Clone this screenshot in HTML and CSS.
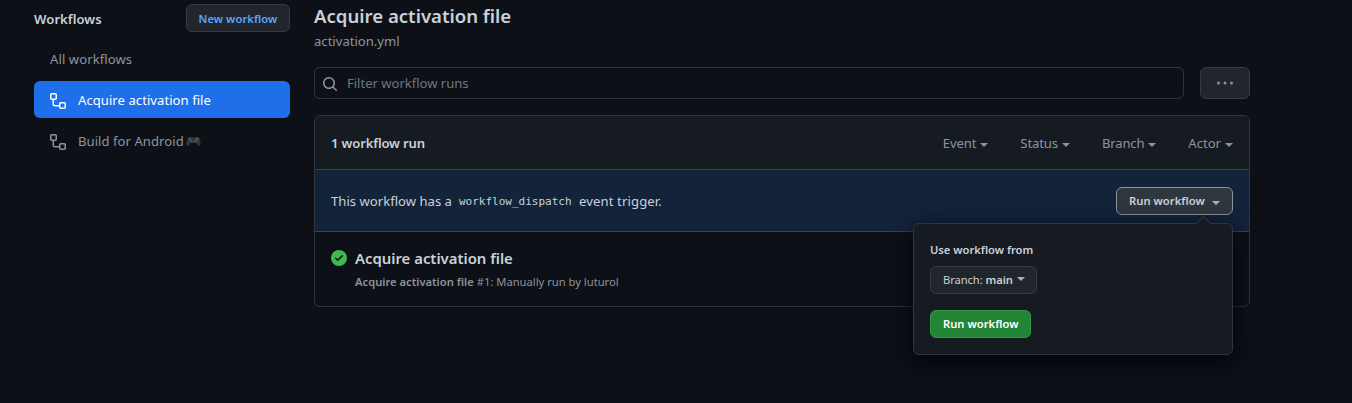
FILE: index.html
```html
<!DOCTYPE html>
<html lang="en">
<head>
<meta charset="utf-8">
<title>Workflow runs</title>
<link rel="stylesheet" href="styles.css">
</head>
<body>
<svg class="defs" width="0" height="0" aria-hidden="true">
  <symbol id="workflow" viewBox="0 0 16 16"><path fill-rule="evenodd" d="M0 1.75C0 .784.784 0 1.75 0h3.5C6.216 0 7 .784 7 1.75v3.5A1.75 1.75 0 015.25 7H4v4a1 1 0 001 1h4v-1.25C9 9.784 9.784 9 10.75 9h3.5c.966 0 1.75.784 1.75 1.75v3.5A1.75 1.75 0 0114.25 16h-3.5A1.75 1.75 0 019 14.25v-.75H5A2.5 2.5 0 012.5 11V7h-.75A1.75 1.75 0 010 5.25v-3.5zm1.75-.25a.25.25 0 00-.25.25v3.5c0 .138.112.25.25.25h3.5a.25.25 0 00.25-.25v-3.5a.25.25 0 00-.25-.25h-3.5zm9 9a.25.25 0 00-.25.25v3.5c0 .138.112.25.25.25h3.5a.25.25 0 00.25-.25v-3.5a.25.25 0 00-.25-.25h-3.5z"/></symbol>
</svg>
<div class="layout">
  <aside class="sidebar">
    <div class="sidebar-head"><h3 class="sidebar-title">Workflows</h3><button class="btn btn-new">New workflow</button></div>
    <nav class="menu">
      <a class="menu-item menu-all">All workflows</a>
      <a class="menu-item selected"><svg class="icon" width="16" height="16"><use href="#workflow"/></svg><span>Acquire activation file</span></a>
      <a class="menu-item"><svg class="icon" width="16" height="16"><use href="#workflow"/></svg><span class="build">Build for Android</span><svg class="pad" width="15" height="11" viewBox="0 0 15 11"><path d="M3 1h2.2l.6.6h3.4l.6-.6H12c1 .2 1.5 1.3 1.9 3 .5 2 .9 4.2.5 5.3-.3.9-1.3.9-2 .1L10.300 7H4.700L2.600 9.400c-.7.8-1.700.8-2-.1C.2 8.200.6 6 1.100 4 1.500 2.300 2 1.200 3 1z" fill="#34373a"/><path d="M3 3.500h2.200M4.100 2.400v2.200" stroke="#666b70" stroke-width=".8"/><circle cx="5.700" cy="5.600" r="1" fill="#505458"/><circle cx="9.300" cy="5.600" r="1" fill="#505458"/><circle cx="10.900" cy="2.500" r=".6" fill="#b09b2b"/><circle cx="12.100" cy="3.600" r=".6" fill="#a64336"/><circle cx="10.900" cy="4.600" r=".6" fill="#3d8048"/><circle cx="9.800" cy="3.600" r=".6" fill="#386da3"/></svg></a>
    </nav>
  </aside>
  <main class="content">
    <h2 class="title">Acquire activation file</h2>
    <div class="filename">activation.yml</div>
    <div class="toolbar">
      <div class="search"><svg class="icon" width="16" height="16" viewBox="0 0 16 16"><path fill-rule="evenodd" d="M11.500 7a4.499 4.499 0 11-8.998 0A4.499 4.499 0 0111.500 7zm-.82 4.740a6 6 0 111.060-1.060l3.040 3.040a.75.75 0 11-1.060 1.060l-3.040-3.040z"/></svg><span>Filter workflow runs</span></div>
      <button class="btn btn-more" aria-label="More"><svg class="icon" width="16" height="16" viewBox="0 0 16 16"><circle cx="1.500" cy="8" r="1.500"/><circle cx="8" cy="8" r="1.500"/><circle cx="14.500" cy="8" r="1.500"/></svg></button>
    </div>
    <section class="box">
      <header class="box-head">
        <strong class="count">1 workflow run</strong>
        <div class="filters"><span class="filter event">Event<i class="caret"></i></span><span class="filter status">Status<i class="caret"></i></span><span class="filter branch">Branch<i class="caret"></i></span><span class="filter actor">Actor<i class="caret"></i></span></div>
      </header>
      <div class="notice">
        <div class="notice-text"><span class="lead">This workflow has a</span><code class="code">workflow_dispatch</code><span class="trail">event trigger.</span></div>
        <div class="dropdown">
          <button class="btn btn-open"><span>Run workflow</span><i class="caret"></i></button>
          <div class="popover">
            <strong class="label">Use workflow from</strong>
            <button class="btn btn-branch"><span>Branch:</span><b class="main-name">main</b><i class="caret"></i></button>
            <button class="btn btn-run">Run workflow</button>
          </div>
        </div>
      </div>
      <article class="run">
        <svg class="check" width="16" height="16" viewBox="0 0 16 16"><path fill-rule="evenodd" d="M8 16A8 8 0 108 0a8 8 0 000 16zm3.780-9.720a.75.75 0 00-1.060-1.060L6.750 9.190 5.280 7.720a.75.75 0 00-1.060 1.060l2 2a.75.75 0 001.060 0l4.500-4.500z"/></svg>
        <div class="run-body"><h4 class="run-title">Acquire activation file</h4><div class="run-meta"><b class="run-name">Acquire activation file</b><span class="run-by">#1: Manually run by luturol</span></div></div>
      </article>
    </section>
  </main>
</div>
</body>
</html>
```
FILE: styles.css
```css
* { box-sizing: border-box; }
body { margin: 0; height: 403px; overflow: hidden; background: #0d1117; color: #c9d1d9; font: 13.1px/20px "Noto Sans", sans-serif; }
h2, h3, h4 { margin: 0; font-weight: 600; }
b, strong { font-weight: 600; }
.defs { position: absolute; }
.icon { flex: none; fill: currentColor; }
.layout { display: flex; gap: 24px; padding: 4px 102px 0 34px; }
.sidebar { width: 256px; flex: none; }
.content { flex: 1; min-width: 0; }
.btn { display: flex; align-items: center; height: 28px; padding: 1px 12px 0; border: 1px solid #363b42; border-radius: 6px; background: #21262d; color: #c9d1d9; font: 600 11.2px/18px "Noto Sans", sans-serif; white-space: nowrap; }
.sidebar-head { display: flex; justify-content: space-between; align-items: center; height: 28px; }
.sidebar-title { font-size: 13.1px; line-height: 20px; padding-top: 2px; letter-spacing: .04px; }
.btn-new { width: 104px; padding: 1px 11.5px 0; color: #58a6ff; letter-spacing: .05px; }
.menu { display: flex; flex-direction: column; gap: 4px; padding-top: 8px; color: #8b949e; }
.menu-item { display: flex; align-items: center; height: 37px; padding: 0 16px; border-radius: 6px; letter-spacing: .04px; white-space: nowrap; }
.menu-all { letter-spacing: .07px; }
.menu-item .icon { margin: 3px 12px 0 0; }
.selected { background: #1f6feb; color: #fff; }
.pad { margin: 1px 0 0 2px; }
.title { font-size: 18.6px; line-height: 30px; margin-top: -3px; letter-spacing: -.01px; }
.filename { color: #8b949e; }
.toolbar { display: flex; gap: 16px; margin-top: 16px; }
.search { flex: 1; display: flex; align-items: center; gap: 9px; height: 32px; padding: 0 7px; border: 1px solid #30363d; border-radius: 6px; color: #6e7681; }
.search .icon { color: #8b949e; margin-top: 2px; }
.search span { letter-spacing: -.03px; }
.btn-more { width: 50px; height: 32px; padding-top: 0; justify-content: center; color: #8b949e; }
.box { margin-top: 16px; height: 192px; border: 1px solid #30363d; border-radius: 6px; }
.box-head { display: flex; justify-content: space-between; align-items: center; height: 53px; padding: 1px 16px; background: #161b22; border-radius: 5px 5px 0 0; }
.count { letter-spacing: -.17px; }
.filters { display: flex; gap: 32px; color: #8b949e; }
.filter { display: flex; align-items: center; gap: 4px; }
.event, .status { letter-spacing: -.12px; }
.branch { letter-spacing: -.2px; }
.caret { width: 0; height: 0; border: 4px solid transparent; border-top-color: currentColor; border-bottom: 0; margin-top: 4px; }
.notice { display: flex; justify-content: space-between; align-items: center; height: 63px; padding: 0 16px; border: solid #1c4784; border-width: 1px 0; background: #13233a; }
.notice-text { display: flex; align-items: center; white-space: nowrap; }
.lead { width: 128px; letter-spacing: .01px; }
.code { width: 120px; font: 11px/20px "DejaVu Sans Mono", monospace; padding-top: 2px; }
.trail { letter-spacing: .12px; }
.dropdown { position: relative; }
.btn-open { width: 117px; gap: 7px; background: #30363d; border-color: #8b949e; letter-spacing: .04px; }
.btn-open .caret, .btn-branch .caret { color: #a9b1b9; }
.popover { position: absolute; z-index: 2; top: 36px; right: 0; width: 320px; height: 132px; padding: 16px; display: flex; flex-direction: column; align-items: flex-start; background: #161b22; border: 1px solid #30363d; border-radius: 6px; box-shadow: 0 8px 24px #010409; }
.popover::before { content: ""; position: absolute; top: -6px; right: 23px; width: 10px; height: 10px; background: #161b22; border: solid #30363d; border-width: 1px 0 0 1px; transform: rotate(45deg); }
.label { font-size: 11.2px; line-height: 18px; letter-spacing: -.02px; padding-top: 1px; height: 26px; }
.btn-branch { width: 107px; font-weight: 400; letter-spacing: -.08px; }
.main-name { margin-left: 3px; }
.btn-branch .caret { margin: -2px 0 0 4px; }
.btn-run { width: 101px; margin-top: 16px; background: #238636; border-color: #399649; color: #fff; letter-spacing: .02px; }
.run { display: flex; gap: 8px; padding: 16px; }
.check { flex: none; fill: #3fb950; margin-top: 2px; }
.run-title { font-size: 14.9px; line-height: 20px; letter-spacing: -.01px; }
.run-meta { display: flex; gap: 3px; margin-top: 5px; font-size: 11.2px; line-height: 18px; color: #8b949e; white-space: nowrap; }
```
